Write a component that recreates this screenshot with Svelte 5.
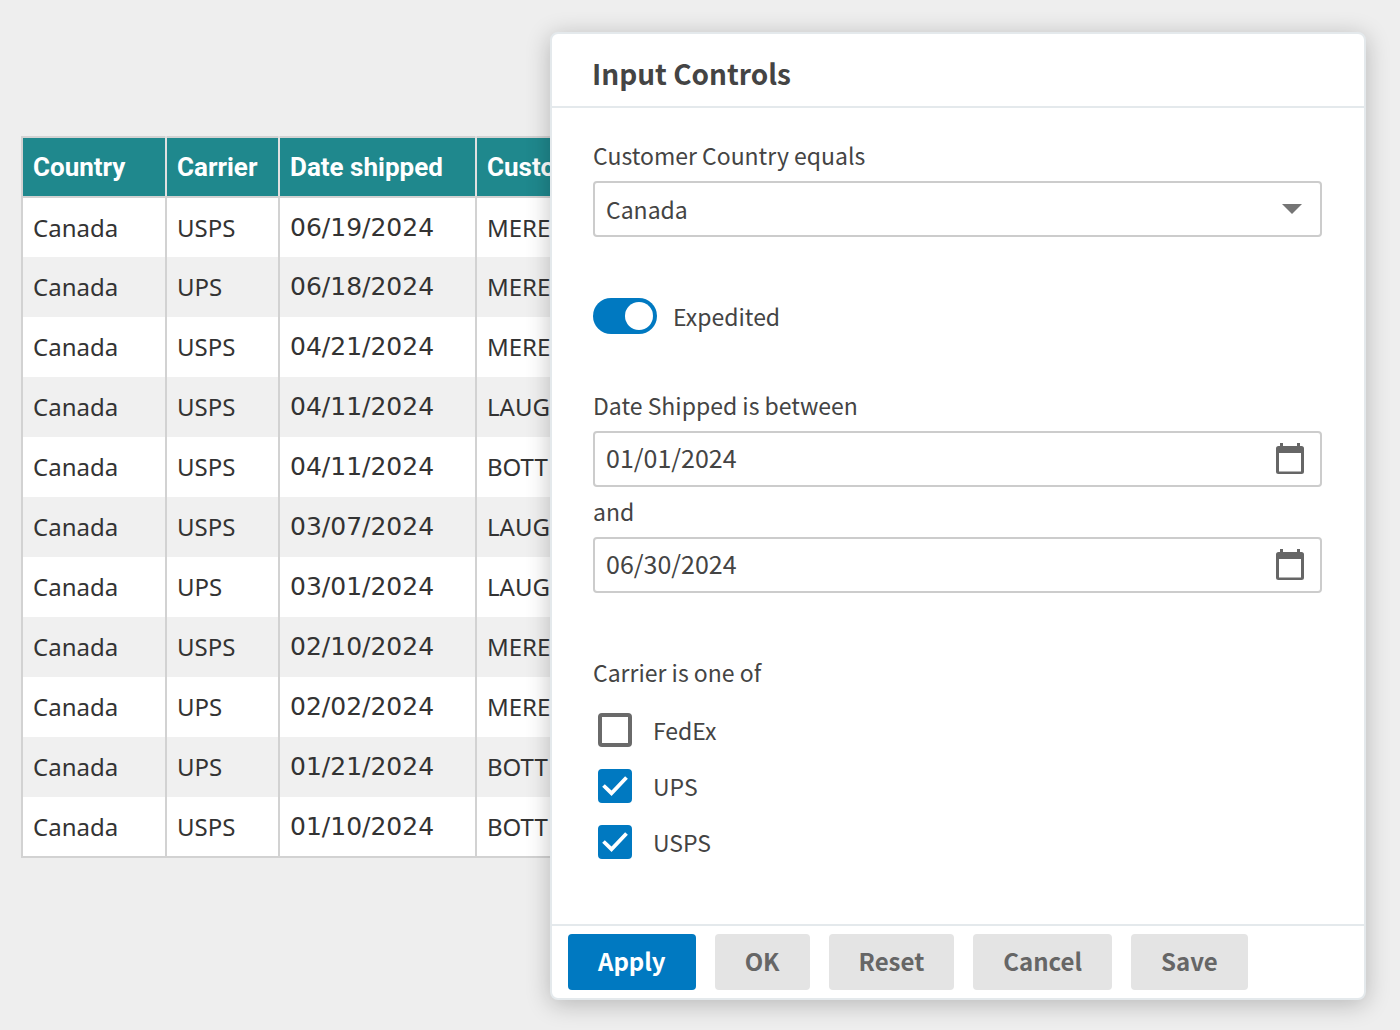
<script>
  let shipments = [
    ['Canada', 'USPS', '06/19/2024', 'MERE'],
    ['Canada', 'UPS', '06/18/2024', 'MERE'],
    ['Canada', 'USPS', '04/21/2024', 'MERE'],
    ['Canada', 'USPS', '04/11/2024', 'LAUG'],
    ['Canada', 'USPS', '04/11/2024', 'BOTT'],
    ['Canada', 'USPS', '03/07/2024', 'LAUG'],
    ['Canada', 'UPS', '03/01/2024', 'LAUG'],
    ['Canada', 'USPS', '02/10/2024', 'MERE'],
    ['Canada', 'UPS', '02/02/2024', 'MERE'],
    ['Canada', 'UPS', '01/21/2024', 'BOTT'],
    ['Canada', 'USPS', '01/10/2024', 'BOTT']
  ];

  let country = $state('Canada');
  let expedited = $state(true);
  let from = $state('01/01/2024');
  let to = $state('06/30/2024');
  let carriers = $state([
    { name: 'FedEx', checked: false },
    { name: 'UPS', checked: true },
    { name: 'USPS', checked: true }
  ]);
</script>

{#snippet calendar()}
  <svg width="28" height="32" viewBox="0 0 28 32" aria-hidden="true">
    <path
      fill="#666"
      fill-rule="evenodd"
      d="M4 0h3v3h14V0h3v3h1.500a2.500 2.500 0 0 1 2.500 2.500v23a2.500 2.500 0 0 1-2.500 2.500h-23A2.500 2.500 0 0 1 0 28.500v-23A2.500 2.500 0 0 1 2.500 3H4zM3 10v18.500h22V10z"
    />
  </svg>
{/snippet}

<main>
  <table>
    <colgroup>
      <col class="country" />
      <col class="carrier" />
      <col class="date" />
      <col />
    </colgroup>
    <thead>
      <tr>
        <th scope="col">Country</th>
        <th scope="col">Carrier</th>
        <th scope="col">Date shipped</th>
        <th scope="col">Customer</th>
      </tr>
    </thead>
    <tbody>
      {#each shipments as [land, carrier, date, customer]}
        <tr>
          <td>{land}</td>
          <td>{carrier}</td>
          <td class="digits">{date}</td>
          <td>{customer}</td>
        </tr>
      {/each}
    </tbody>
  </table>

  <div class="dialog" role="dialog" aria-labelledby="title">
    <header><h1 id="title">Input Controls</h1></header>

    <form id="controls" onsubmit={(e) => e.preventDefault()}>
      <div class="field">
        <label for="country">Customer Country equals</label>
        <div class="box">
          <select id="country" bind:value={country}>
            <option>Canada</option>
          </select>
          <svg class="arrow" width="20" height="10" viewBox="0 0 20 10" aria-hidden="true">
            <path d="M0 0h20L10 10z" fill="#757575" />
          </svg>
        </div>
      </div>

      <label class="toggle">
        <input type="checkbox" role="switch" bind:checked={expedited} />
        <span>Expedited</span>
      </label>

      <div class="field">
        <label for="from">Date Shipped is between</label>
        <div class="box">
          <input id="from" type="text" bind:value={from} />
          <button type="button" class="pick" aria-label="Choose start date">{@render calendar()}</button>
        </div>
        <label class="and" for="to">and</label>
        <div class="box">
          <input id="to" type="text" bind:value={to} />
          <button type="button" class="pick" aria-label="Choose end date">{@render calendar()}</button>
        </div>
      </div>

      <fieldset>
        <legend>Carrier is one of</legend>
        {#each carriers as item}
          <label class="check">
            <span class="tick">
              <input type="checkbox" bind:checked={item.checked} />
              {#if item.checked}
                <svg width="34" height="34" viewBox="0 0 34 34" aria-hidden="true">
                  <path d="M5.500 16.500l8 7.700L28.500 8.500" fill="none" stroke="#fff" stroke-width="3.800" />
                </svg>
              {/if}
            </span>
            <span>{item.name}</span>
          </label>
        {/each}
      </fieldset>
    </form>

    <footer>
      <button class="primary" type="submit" form="controls">Apply</button>
      <button type="button">OK</button>
      <button type="button">Reset</button>
      <button type="button">Cancel</button>
      <button type="button">Save</button>
    </footer>
  </div>
</main>

<style>
  :global(body) {
    margin: 0;
    background: #eee;
  }

  main {
    position: relative;
    box-sizing: border-box;
    min-height: 100vh;
    padding: 136px 34px 32px 21px;
    overflow: hidden;
    font-family: 'Noto Sans CJK SC', 'Noto Sans', sans-serif;
    font-size: 23px;
    line-height: 36px;
    color: #444;
  }

  table {
    width: 100%;
    table-layout: fixed;
    border-collapse: collapse;
    border: 2px solid #d2d2d2;
    background: #fff;
    font-family: 'Noto Sans', sans-serif;
    font-size: 24px;
    color: #333;
  }

  .country {
    width: 144px;
  }

  .carrier {
    width: 113px;
  }

  .date {
    width: 197px;
  }

  th,
  td {
    box-sizing: border-box;
    height: 60px;
    padding: 0 10px;
    border-right: 2px solid #d2d2d2;
    text-align: left;
    white-space: nowrap;
  }

  th {
    border-right-color: #e0e0e0;
    border-bottom: 2px solid #d2d2d2;
    background: #1f888d;
    color: #fff;
    font-family: Roboto, sans-serif;
    font-size: 26px;
    font-weight: 700;
  }

  .digits {
    font-family: 'DejaVu Sans', sans-serif;
    font-size: 25px;
  }

  tbody tr:nth-child(even) {
    background: #f0f0f0;
  }

  .dialog {
    position: absolute;
    top: 32px;
    right: 34px;
    box-sizing: border-box;
    width: min(816px, 100% - 68px);
    border: 2px solid #e4e9ec;
    border-radius: 8px;
    background: #fff;
    box-shadow: 0 4px 24px rgba(0, 0, 0, 0.24);
  }

  header {
    padding: 21px 40px 15px;
    border-bottom: 2px solid #e4e9ec;
  }

  h1 {
    margin: 0;
    font-size: 28px;
    font-weight: 700;
    line-height: 36px;
  }

  form {
    display: flex;
    flex-direction: column;
    padding: 29px 42px 54px 41px;
  }

  .field {
    display: flex;
    flex-direction: column;
  }

  .field > label {
    padding-bottom: 8px;
  }

  .field > .and {
    padding: 6px 0 8px;
  }

  .box {
    display: flex;
    align-items: center;
    box-sizing: border-box;
    height: 56px;
    padding-right: 16px;
    border: 2px solid #ccc;
    border-radius: 4px;
  }

  .box > input,
  select {
    box-sizing: border-box;
    flex: 1;
    min-width: 0;
    height: 100%;
    padding: 0 11px;
    border: 0;
    outline: 0;
    background: transparent;
    appearance: none;
    font: inherit;
    color: inherit;
  }

  .box > input {
    padding-bottom: 4px;
    font-size: 25px;
  }

  .arrow {
    margin-right: 2px;
  }

  .pick {
    display: flex;
    padding: 0;
    border: 0;
    background: none;
  }

  .toggle {
    display: flex;
    align-items: center;
    gap: 16px;
    padding: 61px 0 53px;
  }

  .toggle input {
    display: flex;
    justify-content: flex-end;
    box-sizing: border-box;
    width: 64px;
    height: 36px;
    margin: 0;
    padding: 4px;
    border-radius: 18px;
    background: #999;
    appearance: none;
  }

  .toggle input:checked {
    background: #0079c1;
  }

  .toggle input::before {
    content: '';
    width: 28px;
    height: 28px;
    border-radius: 50%;
    background: #fff;
  }

  fieldset {
    min-width: 0;
    margin: 0;
    padding: 61px 0 0;
    border: 0;
  }

  legend {
    float: left;
    width: 100%;
    padding: 0 0 12px;
  }

  .check {
    display: flex;
    clear: both;
    align-items: center;
    gap: 21px;
    height: 56px;
    padding-left: 5px;
  }

  .tick {
    display: grid;
  }

  .tick > :global(*) {
    grid-area: 1 / 1;
  }

  .tick input {
    box-sizing: border-box;
    width: 34px;
    height: 34px;
    margin: 0;
    border: 4px solid #6a6a6a;
    border-radius: 4px;
    appearance: none;
  }

  .tick input:checked {
    border-color: #0079c1;
    background: #0079c1;
  }

  .tick svg {
    pointer-events: none;
  }

  footer {
    display: flex;
    gap: 19px;
    padding: 8px 16px;
    border-top: 2px solid #e4e9ec;
  }

  footer button {
    height: 56px;
    padding: 0 30px 3px;
    border: 0;
    border-radius: 4px;
    background: #e4e4e4;
    color: #666;
    font: inherit;
    font-size: 24px;
    font-weight: 700;
  }

  footer .primary {
    background: #0079c1;
    color: #fff;
  }
</style>
